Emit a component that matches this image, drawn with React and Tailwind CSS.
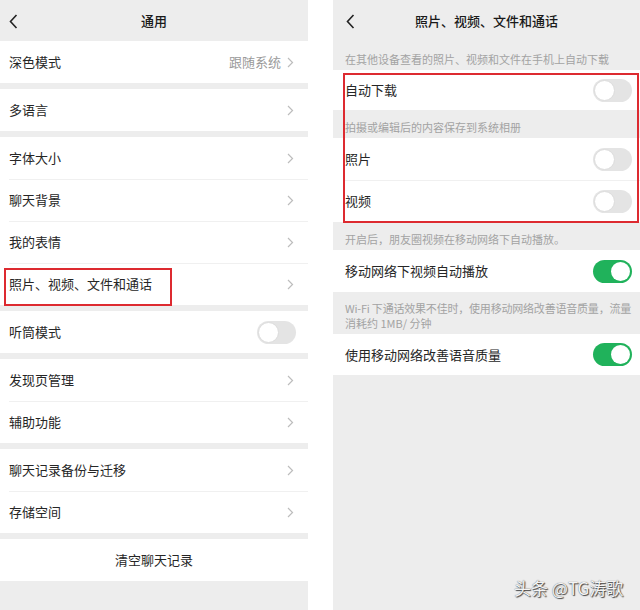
import React from 'react';

const font = { fontFamily: '"Noto Sans CJK SC", "Noto Sans", sans-serif' };

const Chevron = () => (
  <svg width="7" height="11" viewBox="0 0 7 11" className="shrink-0">
    <path d="M1 1l4.5 4.5L1 10" fill="none" stroke="#bdbdbd" strokeWidth="1.2" />
  </svg>
);

const Back = () => (
  <svg width="9" height="15" viewBox="0 0 9 15">
    <path d="M7.5 1L1.5 7.5l6 6.5" fill="none" stroke="#222" strokeWidth="1.6" />
  </svg>
);

const Toggle = ({ on }) =>
  on ? (
    <div className="w-[39px] h-[23px] rounded-full bg-[#20b25b] flex items-center justify-end p-[2px]">
      <div className="w-[19px] h-[19px] rounded-full bg-white" />
    </div>
  ) : (
    <div className="w-[39px] h-[23px] rounded-full bg-[#e4e4e4] flex items-center p-[1px]">
      <div className="w-[21px] h-[21px] rounded-full bg-white border border-[#dcdcdc]" />
    </div>
  );

// left side row
const Row = ({ label, value, toggle, first, children }) => (
  <div className="relative h-[42px] bg-white">
    {!first && <div className="absolute top-0 left-[9px] right-0 border-t border-[#f0f0f0]" />}
    <div className={`h-full flex items-center pl-[9px] ${toggle ? 'pr-[12px]' : 'pr-[14px]'}`}>
      <span className="flex-1 text-[13px] text-[#262626]">{label}</span>
      {value && <span className="text-[13px] text-[#9a9a9a] mr-[6px]">{value}</span>}
      {toggle ? <Toggle /> : <Chevron />}
    </div>
    {children}
  </div>
);

// right side row
const SwitchRow = ({ label, on, first, h = 'h-[42px]' }) => (
  <div className={`relative ${h} bg-white`}>
    {!first && <div className="absolute top-0 left-[12px] right-0 border-t border-[#f0f0f0]" />}
    <div className="h-full flex items-center pl-[12px] pr-[8px]">
      <span className="flex-1 text-[13px] text-[#262626]">{label}</span>
      <Toggle on={on} />
    </div>
  </div>
);

const Note = ({ children, h }) => (
  <div className={`${h} flex items-end pl-[12px] pr-0 pb-[3px] text-[11px] leading-[15px] text-[#a3a3a3]`}>
    <p>{children}</p>
  </div>
);

export default function App() {
  return (
    <div className="relative w-[640px] h-[610px] bg-white flex overflow-hidden" style={font}>
      {/* left: 通用 */}
      <div className="w-[308px] h-full bg-[#ededed] flex flex-col">
        <div className="relative h-[41px] flex items-center justify-center">
          <div className="absolute left-[9px] top-[14px]">
            <Back />
          </div>
          <span className="text-[13px] font-medium text-[#1a1a1a]">通用</span>
        </div>
        <Row label="深色模式" value="跟随系统" first />
        <div className="h-[6px]" />
        <Row label="多语言" first />
        <div className="h-[6px]" />
        <Row label="字体大小" first />
        <Row label="聊天背景" />
        <Row label="我的表情" />
        <Row label="照片、视频、文件和通话">
          <div className="absolute left-[4px] top-[5px] w-[168px] h-[38px] border-2 border-[#dd2a30]" />
        </Row>
        <div className="h-[6px]" />
        <Row label="听筒模式" toggle first />
        <div className="h-[6px]" />
        <Row label="发现页管理" first />
        <Row label="辅助功能" />
        <div className="h-[6px]" />
        <Row label="聊天记录备份与迁移" first />
        <Row label="存储空间" />
        <div className="h-[6px]" />
        <div className="h-[42px] bg-white flex items-center justify-center text-[13px] text-[#262626]">
          清空聊天记录
        </div>
      </div>

      <div className="w-[25px] h-full bg-white" />

      {/* right: 照片、视频、文件和通话 */}
      <div className="w-[307px] h-full bg-[#ededed] flex flex-col">
        <div className="relative h-[41px] flex items-center justify-center">
          <div className="absolute left-[13px] top-[14px]">
            <Back />
          </div>
          <span className="text-[13px] font-medium text-[#1a1a1a]">照片、视频、文件和通话</span>
        </div>
        <Note h="h-[29px]">在其他设备查看的照片、视频和文件在手机上自动下载</Note>
        <div className="relative">
          <SwitchRow label="自动下载" first h="h-[40px]" />
          <Note h="h-[28px]">拍摄或编辑后的内容保存到系统相册</Note>
          <SwitchRow label="照片" first />
          <SwitchRow label="视频" />
          <div className="absolute left-[10px] right-[1px] top-[3px] -bottom-[1px] border-2 border-[#dd2a30]" />
        </div>
        <Note h="h-[28px]">开启后，朋友圈视频在移动网络下自动播放。</Note>
        <SwitchRow label="移动网络下视频自动播放" on first />
        <Note h="h-[42px]">
          <span className="whitespace-nowrap tracking-[-0.2px]">Wi-Fi 下通话效果不佳时，使用移动网络改善语音质量，流量</span>
          <br />
          消耗约 1MB/ 分钟
        </Note>
        <SwitchRow label="使用移动网络改善语音质量" on first h="h-[41px]" />
      </div>

      <div className="absolute left-[514px] top-[575px] text-[17px] text-[#f4f4f4] [text-shadow:1px_1px_1px_#444,0_0_1px_#555]">
        头条 @TG涛歌
      </div>
    </div>
  );
}
